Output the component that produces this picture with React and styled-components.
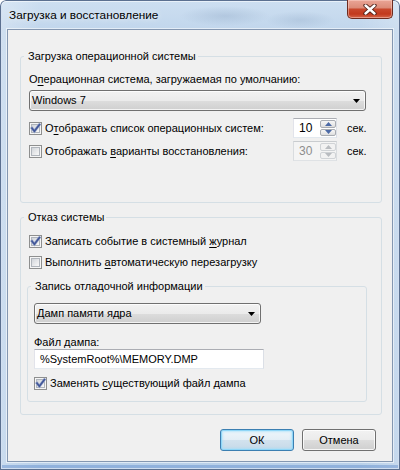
import React from "react";
import styled, { createGlobalStyle } from "styled-components";

const Global = createGlobalStyle`
  html, body { margin: 0; padding: 0; background: #ffffff; }
  body {
    font-family: "Liberation Sans", "Noto Sans", sans-serif;
    font-size: 11px;
    color: #000;
  }
`;

const Window = styled.div`
  width: 400px;
  height: 470px;
  box-sizing: border-box;
  display: flex;
  flex-direction: column;
  padding: 0 7px 8px 7px;
  border-radius: 6px 6px 0 0;
  background:
    radial-gradient(ellipse 45px 10px at 225px 16px, rgba(140, 165, 195, 0.35), transparent),
    radial-gradient(ellipse 35px 9px at 300px 20px, rgba(140, 165, 195, 0.3), transparent),
    linear-gradient(90deg, rgba(255,255,255,0.25) 0px, transparent 40px, transparent 360px, rgba(255,255,255,0.2) 400px),
    linear-gradient(180deg, #cddff1 0px, #c1d6ec 30px, #b9d0e9 100%);
  box-shadow:
    inset 0 0 0 1px #5b7090,
    inset 0 0 0 2px rgba(255, 255, 255, 0.55),
    inset 0 -3px 0 2px rgba(95, 140, 205, 0.45);
`;

const TitleBar = styled.div`
  height: 29px;
  display: flex;
  justify-content: space-between;
  align-items: flex-start;
`;

const TitleText = styled.div`
  margin: 7px 0 0 2px;
  font-size: 11.8px;
  line-height: 16px;
  text-shadow: 0 0 6px rgba(255, 255, 255, 0.9);
`;

const CloseButton = styled.div`
  width: 46px;
  height: 19px;
  box-sizing: border-box;
  border: 1px solid #6d2b1f;
  border-top: none;
  border-radius: 0 0 5px 5px;
  background: linear-gradient(180deg, #eaa596 0%, #dc8c79 42%, #c8472c 52%, #c2391d 78%, #d5664a 100%);
  box-shadow: inset 0 0 0 1px rgba(255, 220, 210, 0.45);
  display: flex;
  align-items: center;
  justify-content: center;
`;

const Client = styled.div`
  flex: 1;
  display: flex;
  flex-direction: column;
  background: #f0f0f0;
  border: 1px solid #8497b1;
  box-shadow: 0 0 0 1px rgba(255, 255, 255, 0.55);
  padding: 19px 10px 0 12px;
`;

const Group = styled.fieldset`
  margin: ${(p) => p.$mt || 0}px 0 0 0;
  padding: 0;
  border: 1px solid #d5dfe5;
  border-radius: 3px;
  min-inline-size: 0;
`;

const Legend = styled.legend`
  margin-left: 3px;
  padding: 0 2px 0 4px;
  line-height: 15px;
`;

const GroupBody = styled.div`
  display: flex;
  flex-direction: column;
  padding: ${(p) => p.$pad};
`;

const Label = styled.div`
  line-height: ${(p) => p.$lh || 15}px;
  margin-top: ${(p) => p.$mt || 0}px;
`;

const Combo = styled.div`
  width: ${(p) => p.$w};
  height: 21px;
  box-sizing: border-box;
  margin-top: ${(p) => p.$mt || 0}px;
  border: 1px solid #707070;
  border-radius: 3px;
  background: linear-gradient(180deg, #f2f2f2 0%, #ebebeb 50%, #dddddd 51%, #cfcfcf 100%);
  box-shadow: inset 0 0 0 1px rgba(255, 255, 255, 0.75);
  display: flex;
  align-items: center;
  justify-content: space-between;
  padding: 0 5px 0 2px;
  line-height: 15px;
`;

const Row = styled.div`
  display: flex;
  align-items: center;
  height: ${(p) => p.$h || 15}px;
  margin: ${(p) => p.$mt || 0}px 0 0 ${(p) => p.$ml || 0}px;
`;

const CheckLabel = styled.div`
  flex: 1;
  margin-left: 3px;
  line-height: 15px;
  white-space: nowrap;
`;

const Box = styled.span`
  position: relative;
  flex: none;
  width: 13px;
  height: 13px;
  box-sizing: border-box;
  border: 1px solid #8e8f8f;
  background: #f5f5f5;
  &::before {
    content: "";
    position: absolute;
    inset: 1px;
    border: 1px solid #b0b5bc;
    background: linear-gradient(135deg, #d1d5da 0%, #e8e9eb 55%, #f8f8f8 100%);
  }
  svg {
    position: absolute;
    left: -1px;
    top: -1px;
  }
`;

const U = styled.span`
  text-decoration: underline;
  text-underline-offset: 2px;
`;

const Spin = styled.div`
  display: flex;
  width: 44px;
  height: 20px;
  box-sizing: border-box;
  border: 1px solid;
  border-color: ${(p) => (p.$disabled ? "#c9cccf #d9dcdf #dfe2e5 #d9dcdf" : "#abadb3 #dbdfe6 #e3e9ef #e2e3ea")};
  background: ${(p) => (p.$disabled ? "#f4f4f4" : "#ffffff")};
  color: ${(p) => (p.$disabled ? "#8d8d8d" : "#000")};
`;

const SpinValue = styled.div`
  flex: 1;
  padding-left: 5px;
  line-height: 18px;
  font-size: 12px;
`;

const SpinButtons = styled.div`
  width: 16px;
  display: flex;
  flex-direction: column;
  gap: 1px;
  padding: 1px 0;
  box-sizing: border-box;
`;

const SpinButton = styled.div`
  flex: 1;
  border: 1px solid ${(p) => (p.$disabled ? "#d0d3d6" : "#a9adb3")};
  border-radius: 2px;
  background: ${(p) =>
    p.$disabled ? "#f2f2f2" : "linear-gradient(180deg, #f6f6f6 0%, #e9e9e9 60%, #dcdcdc 100%)"};
  display: flex;
  align-items: center;
  justify-content: center;
`;

const Unit = styled.div`
  width: 19px;
  margin-left: 10px;
  line-height: 15px;
  white-space: nowrap;
`;

const TextBox = styled.div`
  width: ${(p) => p.$w};
  height: 20px;
  box-sizing: border-box;
  border: 1px solid;
  border-color: #abadb3 #dbdfe6 #e3e9ef #e2e3ea;
  background: #ffffff;
  padding-left: 5px;
  line-height: 18px;
`;

const ButtonRow = styled.div`
  display: flex;
  justify-content: flex-end;
  gap: 8px;
  margin: 14px 6px 0 0;
`;

const Button = styled.div`
  width: 74px;
  height: 22px;
  box-sizing: border-box;
  border: 1px solid ${(p) => (p.$default ? "#3c7fb1" : "#707070")};
  border-radius: 3px;
  background: ${(p) =>
    p.$default
      ? "linear-gradient(180deg, #eef6fb 0%, #e3eef6 50%, #d2e2ee 51%, #c6d9e8 100%)"
      : "linear-gradient(180deg, #f2f2f2 0%, #ebebeb 50%, #dddddd 51%, #cfcfcf 100%)"};
  box-shadow: ${(p) =>
    p.$default ? "inset 0 0 0 1px #8fd6f7, inset 0 0 2px 2px rgba(160, 222, 250, 0.6)" : "inset 0 0 0 1px rgba(255,255,255,0.8)"};
  display: flex;
  align-items: center;
  justify-content: center;
  line-height: 15px;
`;

const Check = ({ checked }) => (
  <Box>
    {checked && (
      <svg width="13" height="13" viewBox="0 0 13 13">
        <path d="M3 6.2 L5.4 9.2 L10.4 2.6" fill="none" stroke="#9aa8c8" strokeWidth="2.8" strokeLinecap="square" />
        <path d="M3 6.2 L5.4 9.2 L10.4 2.6" fill="none" stroke="#42579a" strokeWidth="1.7" strokeLinecap="square" />
      </svg>
    )}
  </Box>
);

const Arrow = ({ up, color }) => (
  <svg width="7" height="4" viewBox="0 0 7 4">
    <path d={up ? "M0 4 L3.5 0 L7 4 Z" : "M0 0 L7 0 L3.5 4 Z"} fill={color} />
  </svg>
);

const DropArrow = () => (
  <svg width="7" height="4" viewBox="0 0 7 4">
    <path d="M0 0 L7 0 L3.5 4 Z" fill="#000" />
  </svg>
);

const SpinEdit = ({ value, disabled }) => (
  <Spin $disabled={disabled}>
    <SpinValue>{value}</SpinValue>
    <SpinButtons>
      <SpinButton $disabled={disabled}>
        <Arrow up color={disabled ? "#b9bcc0" : "#4c6aa6"} />
      </SpinButton>
      <SpinButton $disabled={disabled}>
        <Arrow color={disabled ? "#b9bcc0" : "#4c6aa6"} />
      </SpinButton>
    </SpinButtons>
  </Spin>
);

export default function App() {
  return (
    <>
      <Global />
      <Window>
        <TitleBar>
          <TitleText>Загрузка и восстановление</TitleText>
          <CloseButton>
            <svg width="14" height="11" viewBox="0 0 14 11">
              <path d="M2.5 1.5 L11.5 9.5 M11.5 1.5 L2.5 9.5" stroke="#4a1c14" strokeWidth="4.2" strokeLinecap="round" />
              <path d="M2.5 1.5 L11.5 9.5 M11.5 1.5 L2.5 9.5" stroke="#ffffff" strokeWidth="2.4" strokeLinecap="round" />
            </svg>
          </CloseButton>
        </TitleBar>
        <Client>
          <Group>
            <Legend>Загрузка операционной системы</Legend>
            <GroupBody $pad="8px 15px 41px 8px">
              <Label>
                О<U>п</U>ерационная система, загружаемая по умолчанию:
              </Label>
              <Combo $w="100%" $mt={3}>
                <span>Windows 7</span>
                <DropArrow />
              </Combo>
              <Row $h={20} $mt={7}>
                <Check checked />
                <CheckLabel>
                  О<U>т</U>ображать список операционных систем:
                </CheckLabel>
                <SpinEdit value="10" />
                <Unit>сек.</Unit>
              </Row>
              <Row $h={20} $mt={3}>
                <Check />
                <CheckLabel>
                  Отображать <U>в</U>арианты восстановления:
                </CheckLabel>
                <SpinEdit value="30" disabled />
                <Unit>сек.</Unit>
              </Row>
            </GroupBody>
          </Group>

          <Group $mt={7}>
            <Legend>Отказ системы</Legend>
            <GroupBody $pad="9px 14px 12px 6px">
              <Row $ml={2}>
                <Check checked />
                <CheckLabel>
                  Записать событие в системный <U>ж</U>урнал
                </CheckLabel>
              </Row>
              <Row $ml={2} $mt={6}>
                <Check />
                <CheckLabel>
                  Выполнить <U>а</U>втоматическую перезагрузку
                </CheckLabel>
              </Row>
              <Group $mt={9}>
                <Legend>Запись отладочной информации</Legend>
                <GroupBody $pad="9px 10px 10px 6px">
                  <Combo $w="227px">
                    <span>Дамп памяти ядра</span>
                    <DropArrow />
                  </Combo>
                  <Label $mt={11} $lh={14}>
                    Файл дампа:
                  </Label>
                  <TextBox $w="230px">%SystemRoot%\MEMORY.DMP</TextBox>
                  <Row $mt={7}>
                    <Check checked />
                    <CheckLabel>
                      Заменять <U>с</U>уществующий файл дампа
                    </CheckLabel>
                  </Row>
                </GroupBody>
              </Group>
            </GroupBody>
          </Group>

          <ButtonRow>
            <Button $default>ОК</Button>
            <Button>Отмена</Button>
          </ButtonRow>
        </Client>
      </Window>
    </>
  );
}
